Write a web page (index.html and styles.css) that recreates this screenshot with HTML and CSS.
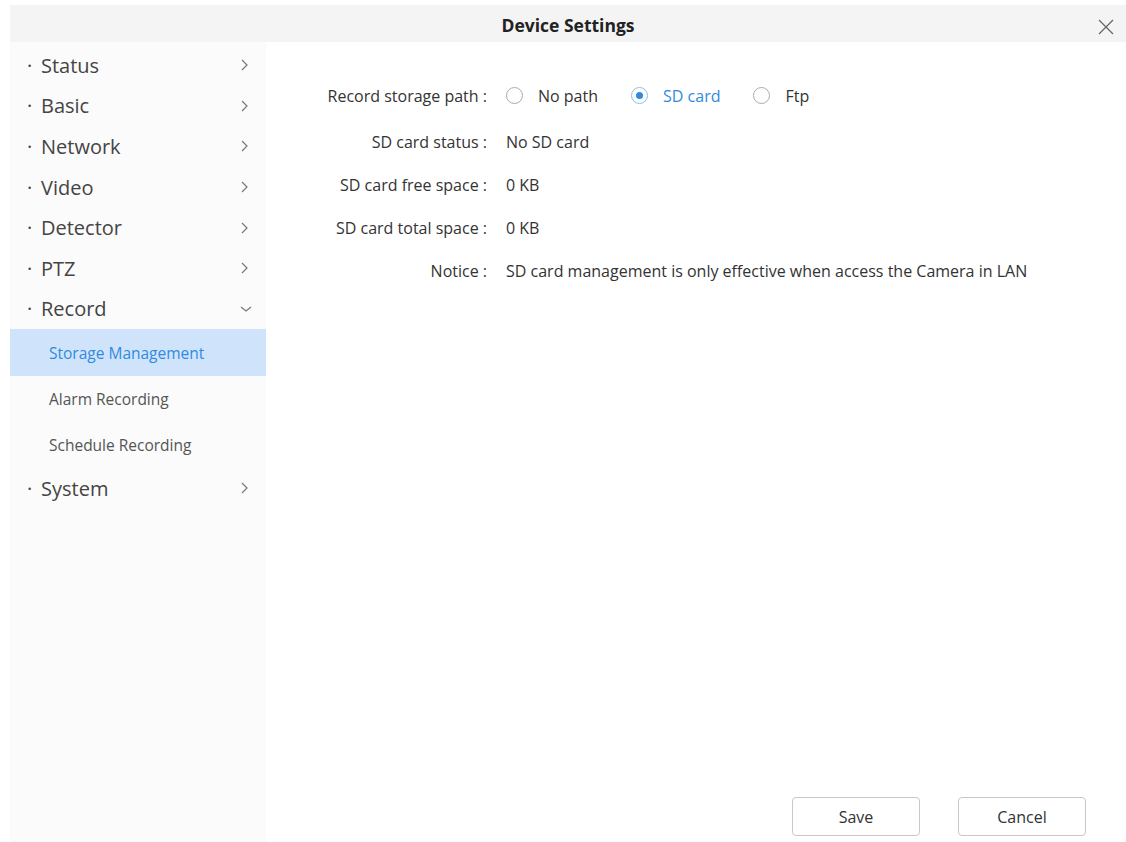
FILE: index.html
```html
<!DOCTYPE html>
<html lang="en">
<head>
  <meta charset="UTF-8" />
  <title>Device Settings</title>
  <link rel="stylesheet" href="styles.css">
</head>
<body>
  <div class="window">
    <div class="titlebar">
      <h2>Device Settings</h2>
      <span class="close">
        <svg width="16" height="16" viewBox="0 0 16 16"><path d="M1 1 L15 15 M15 1 L1 15" stroke="#666" stroke-width="1.3" fill="none"/></svg>
      </span>
    </div>

    <div class="body">
      <ul class="menu">
        <li class="item"><span>Status</span><svg class="arrow" viewBox="0 0 10 14"><path d="M2 2 L7 7 L2 12"/></svg></li>
        <li class="item"><span>Basic</span><svg class="arrow" viewBox="0 0 10 14"><path d="M2 2 L7 7 L2 12"/></svg></li>
        <li class="item"><span>Network</span><svg class="arrow" viewBox="0 0 10 14"><path d="M2 2 L7 7 L2 12"/></svg></li>
        <li class="item"><span>Video</span><svg class="arrow" viewBox="0 0 10 14"><path d="M2 2 L7 7 L2 12"/></svg></li>
        <li class="item"><span>Detector</span><svg class="arrow" viewBox="0 0 10 14"><path d="M2 2 L7 7 L2 12"/></svg></li>
        <li class="item"><span>PTZ</span><svg class="arrow" viewBox="0 0 10 14"><path d="M2 2 L7 7 L2 12"/></svg></li>
        <li class="item"><span>Record</span><svg class="arrow down" viewBox="0 0 14 10"><path d="M2 3 L7 7 L12 3"/></svg></li>
        <li class="sub active">Storage Management</li>
        <li class="sub">Alarm Recording</li>
        <li class="sub">Schedule Recording</li>
        <li class="item"><span>System</span><svg class="arrow" viewBox="0 0 10 14"><path d="M2 2 L7 7 L2 12"/></svg></li>
      </ul>

      <div class="panel">
        <div class="form">
          <div class="label">Record storage path :</div>
          <div class="value radios">
            <label class="radio"><span class="dot"></span>No path</label>
            <label class="radio checked"><span class="dot"></span>SD card</label>
            <label class="radio"><span class="dot"></span>Ftp</label>
          </div>

          <div class="label">SD card status :</div>
          <div class="value">No SD card</div>

          <div class="label">SD card free space :</div>
          <div class="value">0 KB</div>

          <div class="label">SD card total space :</div>
          <div class="value">0 KB</div>

          <div class="label">Notice :</div>
          <div class="value">SD card management is only effective when access the Camera in LAN</div>
        </div>

        <div class="buttons">
          <button>Save</button>
          <button>Cancel</button>
        </div>
      </div>
    </div>
  </div>
</body>
</html>
```

FILE: styles.css
```css
:root {
  --text: #333;
  --muted: #555;
  --blue: #2f8ae0;
  --active-bg: #cfe4fb;
}

html, body {
  margin: 0;
  height: 100%;
  background: #fff;
}

body {
  font-family: 'Open Sans', 'Noto Sans', sans-serif;
  color: var(--text);
}

.window {
  display: flex;
  flex-direction: column;
  height: 100%;
  padding: 5px 0 0 10px;
  box-sizing: border-box;
}

.titlebar {
  height: 37px;
  background: #f4f4f4;
  display: flex;
  align-items: center;
  justify-content: center;
  position: relative;
}

.titlebar h2 {
  margin: 0;
  font-size: 17.5px;
  font-weight: bold;
  color: #222;
  padding-top: 3px;
}

.close {
  position: absolute;
  right: 12px;
  top: 13px;
  width: 16px;
  height: 16px;
}

.body {
  flex: 1;
  display: flex;
}

/* left navigation */
.menu {
  list-style: none;
  margin: 0;
  padding: 3px 0 0;
  width: 256px;
  background: #fbfbfb;
}

.item {
  height: 40.6px;
  display: flex;
  align-items: center;
  justify-content: space-between;
  padding: 0 16px 0 17px;
  font-size: 20px;
  color: #444;
}

.item span::before {
  content: '·';
  display: inline-block;
  width: 14px;
}

.arrow {
  width: 10px;
  height: 14px;
  fill: none;
  stroke: #777;
  stroke-width: 1.2;
}

.arrow.down {
  width: 14px;
  height: 10px;
  margin-right: -3px;
}

.sub {
  height: 46px;
  display: flex;
  align-items: center;
  padding-left: 39px;
  font-size: 15.5px;
  color: var(--muted);
}

.sub.active {
  background: var(--active-bg);
  color: var(--blue);
  height: 47px;
}

/* settings panel */
.panel {
  flex: 1;
  display: flex;
  flex-direction: column;
  padding-top: 33px;
}

.form {
  display: grid;
  grid-template-columns: 221px 1fr;
  column-gap: 19px;
  font-size: 16px;
}

.label {
  height: 43px;
  display: flex;
  align-items: center;
  justify-content: flex-end;
}

.label:first-child {
  height: 41px;
  margin-bottom: 4px;
}

.value {
  display: flex;
  align-items: center;
  height: 43px;
}

.radios {
  height: 41px;
}

.radio {
  display: flex;
  align-items: center;
  margin-right: 33px;
}

.dot {
  width: 17px;
  height: 17px;
  border: 1px solid #aaa;
  border-radius: 50%;
  margin-right: 15px;
  box-sizing: border-box;
  position: relative;
}

.radio.checked {
  color: var(--blue);
}

.radio.checked .dot {
  border-color: #8bbde8;
}

.radio.checked .dot::after {
  content: '';
  position: absolute;
  left: 4px;
  top: 4px;
  width: 7px;
  height: 7px;
  border-radius: 50%;
  background: var(--blue);
}

.buttons {
  margin-top: auto;
  display: flex;
  justify-content: flex-end;
  gap: 38px;
  padding: 0 40px 6px 0;
}

button {
  width: 128px;
  height: 39px;
  background: #fff;
  border: 1px solid #c8c8c8;
  border-radius: 4px;
  font-family: inherit;
  font-size: 16px;
  color: #333;
}
```
